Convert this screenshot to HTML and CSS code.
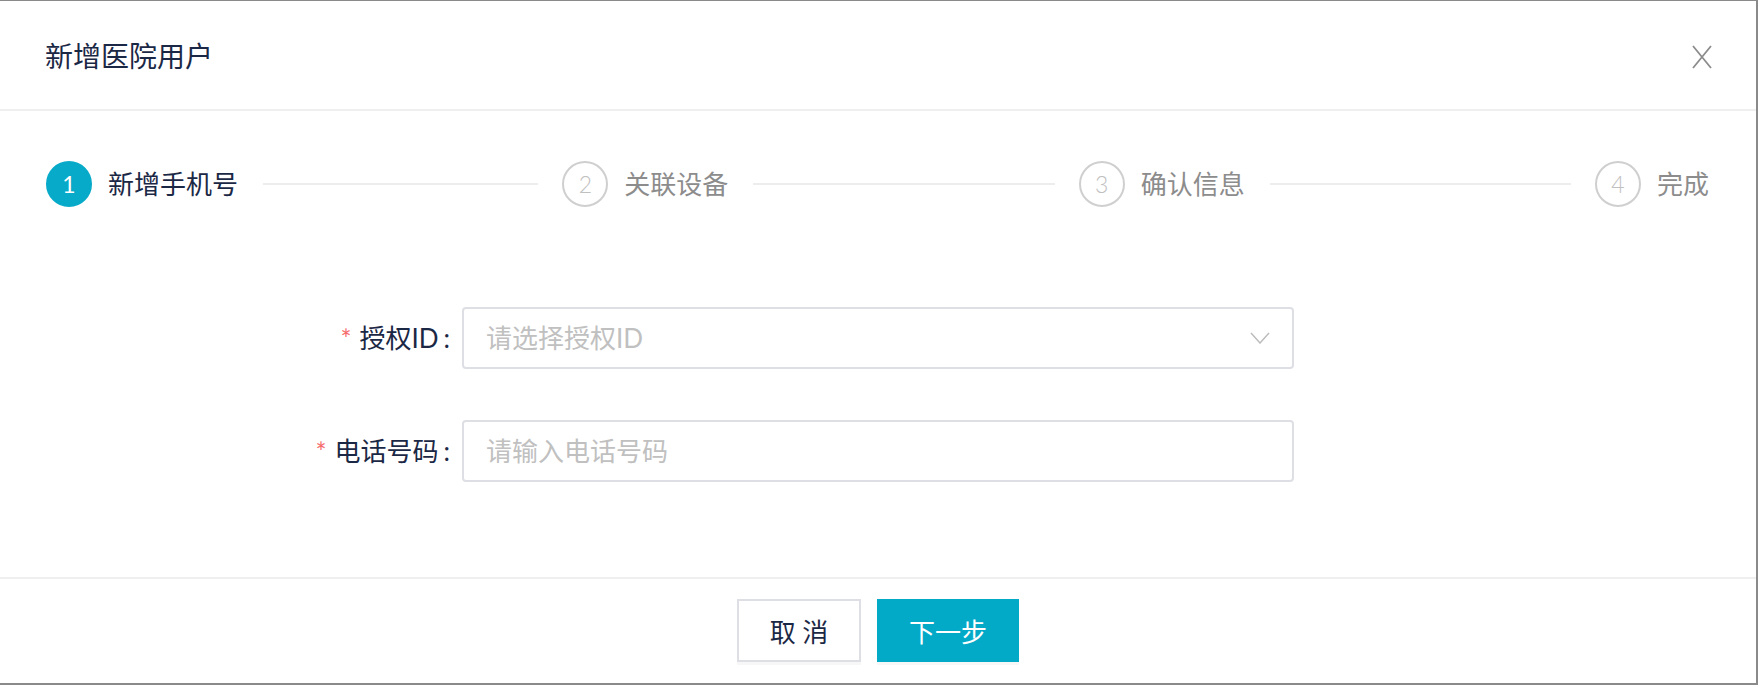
FILE: index.html
```html
<!DOCTYPE html>
<html lang="zh-CN">
<head>
<meta charset="utf-8">
<title>新增医院用户</title>
<link rel="stylesheet" href="styles.css">
</head>
<body>
<div class="page">
  <div class="dialog">
    <div class="dialog-header">
      <h2 class="dialog-title">新增医院用户</h2>
      <button class="close" aria-label="关闭">
        <svg width="20" height="24" viewBox="0 0 20 24"><path d="M1 1 L19 23 M19 1 L1 23" stroke="#8c8c8c" stroke-width="1.8" fill="none"/></svg>
      </button>
    </div>
    <div class="dialog-body">
      <div class="steps">
        <div class="step active">
          <span class="step-icon">1</span>
          <span class="step-title">新增手机号</span>
          <span class="step-tail"></span>
        </div>
        <div class="step">
          <span class="step-icon">2</span>
          <span class="step-title">关联设备</span>
          <span class="step-tail"></span>
        </div>
        <div class="step">
          <span class="step-icon">3</span>
          <span class="step-title">确认信息</span>
          <span class="step-tail"></span>
        </div>
        <div class="step last">
          <span class="step-icon">4</span>
          <span class="step-title">完成</span>
        </div>
      </div>
      <div class="form">
        <div class="form-row">
          <label class="form-label"><span class="req">*</span>授权ID<span class="colon">:</span></label>
          <div class="field select">
            <span class="placeholder">请选择授权ID</span>
            <svg class="chev" width="20" height="12" viewBox="0 0 20 12"><path d="M1 1 L10 11 L19 1" stroke="#bdbdbd" stroke-width="1.5" fill="none"/></svg>
          </div>
        </div>
        <div class="form-row">
          <label class="form-label"><span class="req">*</span>电话号码<span class="colon">:</span></label>
          <div class="field">
            <span class="placeholder">请输入电话号码</span>
          </div>
        </div>
      </div>
    </div>
    <div class="dialog-footer">
      <button class="btn btn-default">取 消</button>
      <button class="btn btn-primary">下一步</button>
    </div>
  </div>
</div>
</body>
</html>
```
FILE: styles.css
```css
* { box-sizing: border-box; }
html, body { margin: 0; padding: 0; }
body {
  width: 1760px;
  height: 686px;
  overflow: hidden;
  background: #ffffff;
  font-family: "Lato", "Noto Sans CJK SC", sans-serif;
  color: #1b2845;
}
.page { width: 1760px; height: 686px; }
.dialog {
  width: 1758px;
  height: 685px;
  background: #fff;
  border-top: 1px solid #8a8a8a;
  border-right: 2px solid #8a8a8a;
  border-bottom: 2px solid #8a8a8a;
  display: flex;
  flex-direction: column;
}
.dialog-header {
  height: 110px;
  border-bottom: 2px solid #efefef;
  display: flex;
  align-items: center;
  justify-content: space-between;
  padding: 0 44px 0 45px;
}
.dialog-title {
  margin: 0;
  font-size: 28px;
  font-weight: 400;
  color: #1b2845;
  line-height: 1;
  margin-top: 2px;
}
.close {
  border: 0;
  background: none;
  padding: 0;
  width: 20px;
  height: 24px;
  margin-top: 4px;
  display: flex;
}
.dialog-body {
  flex: 1;
  padding: 50px 47px 0 46px;
  border-bottom: 2px solid #efefef;
}
.steps {
  display: flex;
  align-items: center;
  height: 46px;
}
.step {
  flex: 1;
  display: flex;
  align-items: center;
}
.step.last { flex: none; }
.step-icon {
  width: 46px;
  height: 46px;
  border-radius: 50%;
  border: 2px solid #cfcfcf;
  color: #c0c0c0;
  font-size: 23px;
  font-weight: 300;
  display: flex;
  align-items: center;
  justify-content: center;
  flex: none;
}
.step.active .step-icon {
  background: #07aac8;
  border-color: #07aac8;
  color: #fff;
  font-weight: 400;
}
.step-title {
  font-size: 26px;
  color: #8c8c8c;
  margin-left: 16px;
  line-height: 1;
  flex: none;
}
.step.active .step-title { color: #1b2845; }
.step-tail {
  flex: 1;
  height: 2px;
  background: #ededed;
  margin: 0 24px 0 25px;
}
.form {
  margin-top: 100px;
  display: flex;
  flex-direction: column;
  gap: 51px;
}
.form-row {
  display: grid;
  grid-template-columns: 1fr 832px 1fr;
  align-items: center;
  margin: 0 -47px 0 -46px;
}
.form-label {
  justify-self: end;
  padding-right: 12px;
  font-size: 26px;
  color: #1b2845;
  line-height: 1;
}
.colon { margin-left: 5px; }
.req {
  color: #f56c6c;
  font-size: 26px;
  margin-right: 8px;
  position: relative;
  top: 1px;
}
.field {
  height: 62px;
  border: 2px solid #dedfe4;
  border-radius: 4px;
  display: flex;
  align-items: center;
  padding: 0 22px 0 22px;
}
.placeholder {
  font-size: 26px;
  color: #c0c0c0;
  flex: 1;
  line-height: 1;
}
.chev { flex: none; }
.dialog-footer {
  height: 104px;
  display: flex;
  justify-content: center;
  align-items: center;
  gap: 16px;
  padding-bottom: 2px;
}
.btn {
  height: 63px;
  font-family: "Lato", "Noto Sans CJK SC", sans-serif;
  font-size: 26px;
  border-radius: 0;
  box-shadow: 0 3px 0 rgba(0,0,0,0.03);
  cursor: pointer;
}
.btn-default {
  width: 124px;
  background: #fff;
  border: 2px solid #dedfe4;
  color: #1b2845;
}
.btn-primary {
  width: 142px;
  background: #03aac8;
  border: 0;
  color: #fff;
}
```
